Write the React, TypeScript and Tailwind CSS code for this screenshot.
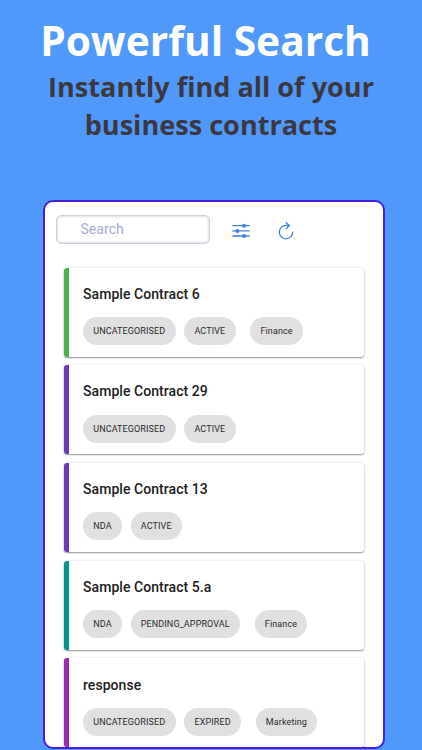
type Contract = {
  name: string;
  accent: string;
  chips: string[];
  tag?: string;
};

const contracts: Contract[] = [
  {
    name: "Sample Contract 6",
    accent: "bg-[#4caf50]",
    chips: ["UNCATEGORISED", "ACTIVE"],
    tag: "Finance",
  },
  {
    name: "Sample Contract 29",
    accent: "bg-[#673ab7]",
    chips: ["UNCATEGORISED", "ACTIVE"],
  },
  {
    name: "Sample Contract 13",
    accent: "bg-[#673ab7]",
    chips: ["NDA", "ACTIVE"],
  },
  {
    name: "Sample Contract 5.a",
    accent: "bg-[#009688]",
    chips: ["NDA", "PENDING_APPROVAL"],
    tag: "Finance",
  },
  {
    name: "response",
    accent: "bg-[#9c27b0]",
    chips: ["UNCATEGORISED", "EXPIRED"],
    tag: "Marketing",
  },
];

function FilterIcon() {
  return (
    <svg width="18" height="16" viewBox="0 0 18 16" fill="#3f7fe8">
      <path d="M.8 2.7h16.4M.8 7.9h16.4M.8 13h16.4" stroke="#3f7fe8" strokeWidth="1.3" strokeLinecap="round" />
      <circle cx="12" cy="2.7" r="2" />
      <circle cx="5.4" cy="7.9" r="2" />
      <circle cx="12" cy="13" r="2" />
    </svg>
  );
}

function RefreshIcon() {
  return (
    <svg
      width="16"
      height="18"
      viewBox="0 0 16 18"
      fill="none"
      stroke="#3f7fe8"
      strokeWidth="1.3"
      strokeLinecap="round"
      strokeLinejoin="round"
    >
      <path d="M14.7 10.1A6.7 6.7 0 1 1 8 3.4h3.2" />
      <path d="M8.3.7l3 2.8-3 3" />
    </svg>
  );
}

function Chip({ label, className = "" }: { label: string; className?: string }) {
  return (
    <span
      className={`flex h-7 items-center rounded-full bg-[#e0e0e0] px-[10.2px] pt-[1.5px] text-[9px] tracking-[0.12px] text-[#2b2b2b] ${className}`}
    >
      {label}
    </span>
  );
}

function ContractCard({ contract }: { contract: Contract }) {
  return (
    <div className="flex h-[89.2px] shrink-0 overflow-hidden rounded-[3px] bg-white shadow-[0_1px_1.5px_rgba(0,0,0,0.38),0_0_3px_rgba(0,0,0,0.12)]">
      <div className={`w-[5px] shrink-0 ${contract.accent}`} />
      <div className="flex-1 pt-[16.3px] pl-[13.7px]">
        <h3 className="text-[14px] leading-[20px] font-medium tracking-[0.06px] text-[#212121]">
          {contract.name}
        </h3>
        <div className="mt-[13.2px] flex gap-[8.7px]">
          {contract.chips.map((chip) => (
            <Chip key={chip} label={chip} />
          ))}
          {contract.tag && <Chip label={contract.tag} className="ml-[6px]" />}
        </div>
      </div>
    </div>
  );
}

export default function App() {
  return (
    <div className="flex h-[750px] w-[422px] flex-col items-center overflow-hidden bg-[#5099fb] font-['Roboto',sans-serif]">
      <header className="h-[200px] shrink-0 pt-[12px] text-center font-['Open_Sans',sans-serif] font-bold whitespace-nowrap">
        <h1 className="pr-[11px] text-[40.7px] leading-[56px] text-white">Powerful Search</h1>
        <p className="text-[27.1px] leading-[37.6px] text-[#3c3842]">
          Instantly find all of your
          <br />
          business contracts
        </p>
      </header>

      <main className="ml-[6px] h-[549px] w-[342px] shrink-0 overflow-hidden rounded-[10px] border-2 border-[#4a1fdc] bg-white">
        <div className="flex h-[58px] items-center pl-[10.5px]">
          <input
            className="mb-[4px] h-[29px] w-[154.5px] rounded-[5px] border border-[#d0d0df] pl-[24px] text-[14px] tracking-[0.04px] shadow-[inset_0_0_2px_1px_rgba(90,90,140,0.2)] outline-none placeholder:text-[#a5adcf]"
            placeholder="Search"
          />
          <div className="ml-[22px]">
            <FilterIcon />
          </div>
          <div className="ml-[28px]">
            <RefreshIcon />
          </div>
        </div>

        <div className="flex flex-col gap-[8.5px] pt-[7.5px] pr-[19.5px] pl-[19.3px]">
          {contracts.map((contract) => (
            <ContractCard key={contract.name} contract={contract} />
          ))}
        </div>
      </main>
    </div>
  );
}
